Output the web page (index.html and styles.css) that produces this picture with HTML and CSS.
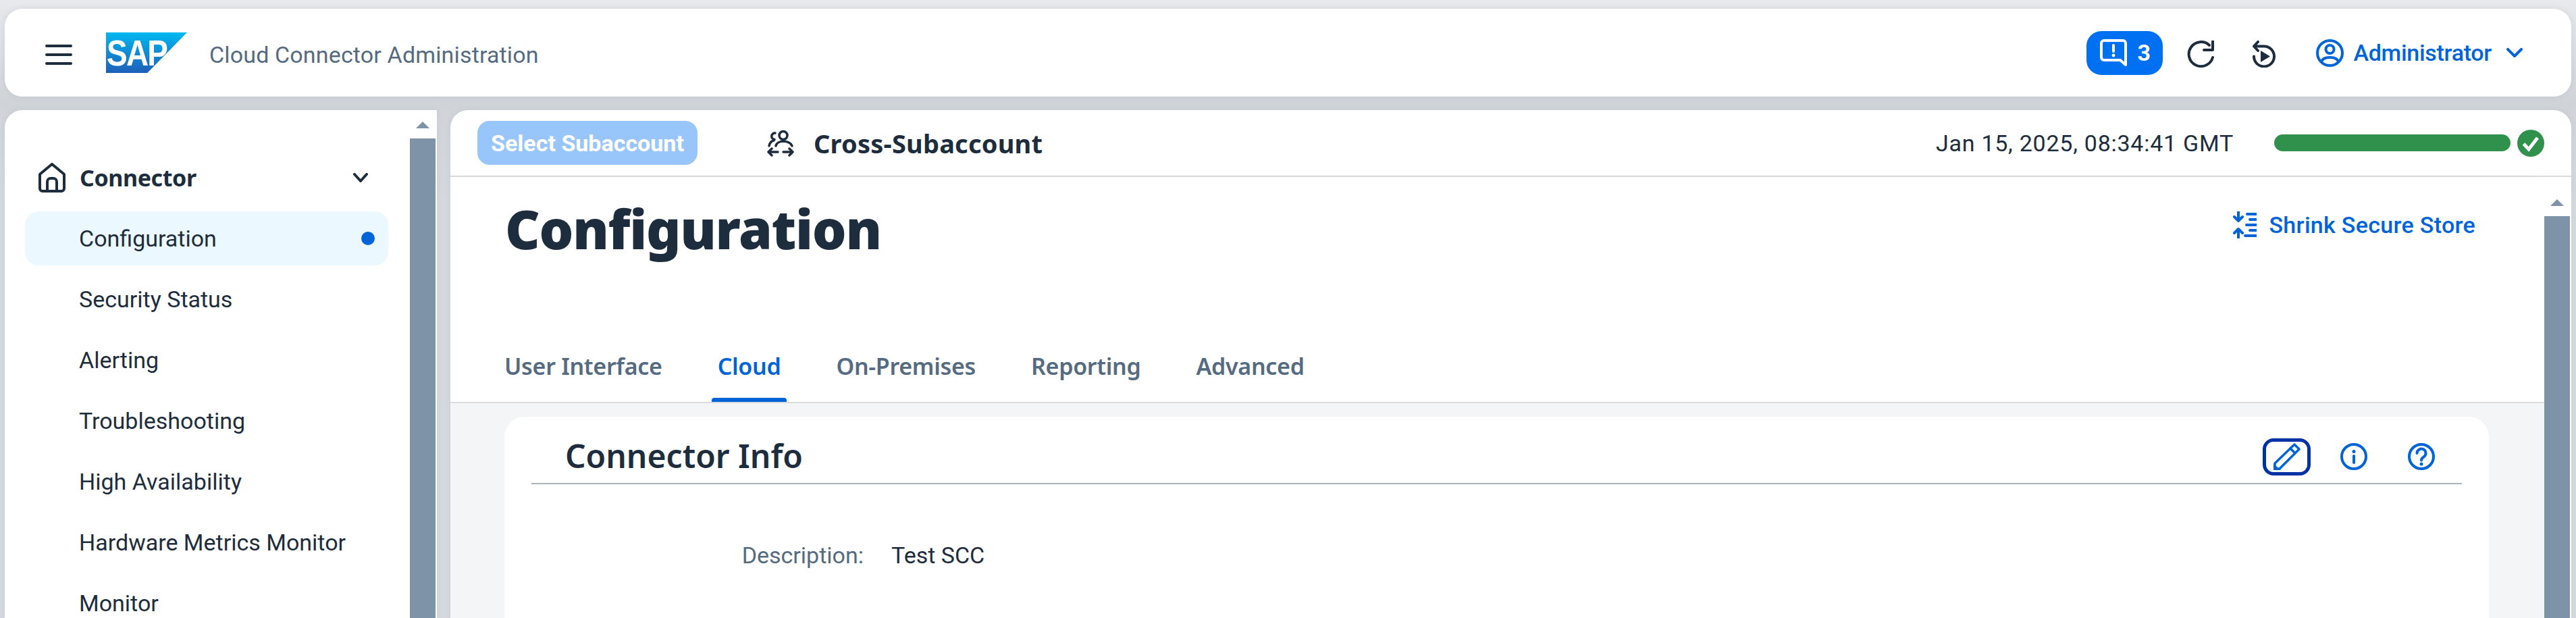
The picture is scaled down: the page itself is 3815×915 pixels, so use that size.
FILE: index.html
```html
<!DOCTYPE html>
<html lang="en">
	<head>
		<meta charset="UTF-8">
		<title>Cloud Connector Administration</title>
		<link rel="stylesheet" href="styles.css">
	</head>
	<body>
		<header class="shell-bar">
			<svg class="icon menu-icon" viewBox="0 0 40 32"><path d="M2 3H38M2 16H38M2 29H38"/></svg>
			<div class="logo"><span class="logo-text">SAP</span></div>
			<div class="app-title">Cloud Connector Administration</div>
			<div class="shell-right">
				<button class="notif-btn">
					<svg class="icon white" viewBox="0 0 40 40"><path d="M6 2H34a4 4 0 0 1 4 4V38L30 31H6a4 4 0 0 1-4-4V6a4 4 0 0 1 4-4z"/><path d="M20 9V18"/><circle class="fill" cx="20" cy="24" r="2.4"/></svg>
					<span>3</span>
				</button>
				<svg class="icon refresh-icon" viewBox="0 0 40 40"><path d="M38 25A18 18 0 1 1 33 7"/><path d="M38 1V14H25"/></svg>
				<svg class="icon replay-icon" viewBox="0 0 36 40"><path d="M8 2L2 8.500L8 15"/><path d="M3 8.500H17A15 15 0 1 1 2 23.500"/><path class="fill no-stroke" d="M12 15L26 23.500L12 32z"/></svg>
				<svg class="icon blue user-icon" viewBox="0 0 41 41"><circle cx="20.500" cy="20.500" r="18.500"/><circle cx="20.500" cy="15" r="6"/><path d="M8 33C11 25 30 25 33 33"/></svg>
				<span class="user-name">Administrator</span>
				<svg class="icon blue user-chevron" viewBox="0 0 24 14"><path d="M2 2L12 12L22 2"/></svg>
			</div>
		</header>

		<div class="workspace">
			<aside class="sidebar">
				<nav class="side-nav">
					<div class="nav-group">
						<svg class="icon home-icon" viewBox="0 0 40 44"><path d="M2 17L20 2L38 17V38a4 4 0 0 1-4 4H6a4 4 0 0 1-4-4z"/><path d="M13 42V28a5 5 0 0 1 5-5h4a5 5 0 0 1 5 5V42"/></svg>
						<span class="nav-group-label">Connector</span>
						<svg class="icon nav-chevron" viewBox="0 0 22 14"><path d="M2 2L11 12L20 2"/></svg>
					</div>
					<a class="nav-item active">Configuration<i class="nav-dot"></i></a>
					<a class="nav-item">Security Status</a>
					<a class="nav-item">Alerting</a>
					<a class="nav-item">Troubleshooting</a>
					<a class="nav-item">High Availability</a>
					<a class="nav-item">Hardware Metrics Monitor</a>
					<a class="nav-item">Monitor</a>
				</nav>
				<div class="scrollbar side-scroll"><div class="scroll-up"></div><div class="scroll-thumb"></div></div>
			</aside>

			<main class="panel">
				<div class="top-bar">
					<button class="select-btn" disabled>Select Subaccount</button>
					<svg class="icon cross-icon" viewBox="0 0 40 40"><circle cx="24" cy="8.500" r="6"/><path d="M11 14.500A4.500 4.500 0 0 1 12 5"/><path d="M13 24C15 15 33 15 37 24"/><path d="M3 24C4 19 6 17 10 16"/><path d="M2 33H16M7 28L2 33L7 38M38 33H24M33 28L38 33L33 38"/></svg>
					<span class="cross-label">Cross-Subaccount</span>
					<span class="timestamp">Jan 15, 2025, 08:34:41 GMT</span>
					<div class="progress"></div>
					<svg class="check-icon" viewBox="0 0 40 40"><circle cx="20" cy="20" r="20" fill="#30914c"/><path d="M9.500 21L17 29L30 12" fill="none" stroke="#fff" stroke-width="5"/></svg>
				</div>

				<div class="panel-body">
					<div class="page">
						<section class="page-head">
							<div class="title-row">
								<h1>Configuration</h1>
								<a class="shrink-link">
									<svg class="icon blue" viewBox="0 0 35 40"><path d="M8 1V14M2 8L8 14L14 8M8 39V26M2 32L8 26L14 32"/><path d="M21 4H35M25 12H35M20 20H35M25 28H35M18 36H35"/></svg>
									Shrink Secure Store
								</a>
							</div>
							<div class="tabs">
								<a class="tab">User Interface</a>
								<a class="tab active">Cloud</a>
								<a class="tab">On-Premises</a>
								<a class="tab">Reporting</a>
								<a class="tab">Advanced</a>
							</div>
						</section>
						<section class="page-content">
							<div class="card">
								<div class="card-head">
									<h2>Connector Info</h2>
									<div class="card-tools">
										<button class="edit-btn"><svg class="icon blue" viewBox="0 0 40 40"><path d="M2 30L31 2L38 9L9 38H2z"/><path d="M25 8L32 15"/><path class="fill no-stroke" d="M0 30L10 40H0z"/></svg></button>
										<svg class="icon blue tool-icon" viewBox="0 0 40 40"><circle cx="20" cy="20" r="18"/><circle class="fill" cx="20" cy="12.500" r="2.500"/><path d="M20 19V29"/></svg>
										<svg class="icon blue tool-icon help-icon" viewBox="0 0 40 40"><circle cx="20" cy="20" r="18"/><path d="M13.500 15A6.500 6.500 0 1 1 23.500 20.500C21 22 20 23 20 25.500"/><circle class="fill" cx="20" cy="31" r="2.500"/></svg>
									</div>
								</div>
								<div class="field-row">
									<span class="field-label">Description:</span>
									<span class="field-value">Test SCC</span>
								</div>
							</div>
						</section>
					</div>
					<div class="scrollbar main-scroll"><div class="scroll-up"></div><div class="scroll-thumb"></div></div>
				</div>
			</main>
		</div>
	</body>
</html>
```

FILE: styles.css
```css
* {
	box-sizing: border-box;
}
html, body {
	height: 100%;
}
body {
	margin: 0;
	padding: 13px 7px 0;
	overflow: hidden;
	font-family: Roboto, "Noto Sans", sans-serif;
	font-size: 34px;
	color: #1d2d3e;
	background: linear-gradient(#e8eaed 0, #e4e6e9 20px, #d0d4d9 150px, #d5d9dd 300px);
}
button {
	font: inherit;
	border: none;
}
h1, h2 {
	margin: 0;
}

/* icons */
.icon {
	flex: none;
	display: block;
	fill: none;
	stroke: #1d2d3e;
	stroke-width: 4;
	stroke-linecap: round;
	stroke-linejoin: round;
}
.icon .fill {
	fill: #1d2d3e;
	stroke: none;
}
.icon.blue {
	stroke: #0064d9;
}
.icon.blue .fill {
	fill: #0064d9;
}
.icon.white {
	stroke: #fff;
}
.icon.white .fill {
	fill: #fff;
}

/* shell bar */
.shell-bar {
	display: flex;
	align-items: center;
	height: 130px;
	padding: 0 72px 0 60px;
	background: #fff;
	border-radius: 26px;
	box-shadow: 0 0 8px rgba(85, 107, 130, .12);
}
.menu-icon {
	width: 40px;
	height: 32px;
	margin-top: 5px;
}
.logo {
	width: 120px;
	height: 60px;
	margin-left: 50px;
	padding: 7px 0 0 1px;
	background: linear-gradient(#00b8f1, #1e5fb8);
	clip-path: polygon(0 0, 100% 0, 51% 100%, 0 100%);
}
.logo-text {
	display: block;
	color: #fff;
	font-family: "Liberation Sans", sans-serif;
	font-weight: 700;
	font-size: 54px;
	line-height: 46px;
	letter-spacing: -2px;
	transform: scaleX(.85);
	transform-origin: left;
}
.app-title {
	margin: 6px 0 0 33px;
	color: #556b82;
	letter-spacing: .15px;
}
.shell-right {
	display: flex;
	align-items: center;
	margin-left: auto;
}
.notif-btn {
	display: flex;
	align-items: center;
	gap: 16px;
	width: 113px;
	height: 65px;
	padding: 0 0 0 20px;
	color: #fff;
	font-weight: 700;
	background: #0070f2;
	border-radius: 22px;
}
.notif-btn svg {
	width: 40px;
	height: 40px;
}
.refresh-icon {
	width: 40px;
	height: 40px;
	margin: 4px 0 0 36px;
}
.replay-icon {
	width: 36px;
	height: 40px;
	margin: 4px 0 0 57px;
}
.user-icon {
	width: 41px;
	height: 41px;
	margin-left: 58px;
}
.user-name {
	margin-left: 15px;
	color: #0064d9;
	font-weight: 500;
	letter-spacing: -.3px;
}
.user-chevron {
	width: 24px;
	height: 14px;
	margin-left: 22px;
}

/* layout below the shell bar */
.workspace {
	display: flex;
	gap: 20px;
	height: 752px;
	margin-top: 20px;
}

/* side navigation */
.sidebar {
	display: flex;
	flex: none;
	width: 640px;
	padding-right: 2px;
	background: #fff;
	border-radius: 26px 0 0 0;
	box-shadow: 0 0 8px rgba(85, 107, 130, .1);
}
.side-nav {
	flex: 1;
	padding: 75px 32px 0 30px;
}
.nav-group {
	display: flex;
	align-items: center;
	height: 50px;
	padding: 0 30px 0 20px;
	margin-bottom: 25px;
}
.home-icon {
	width: 40px;
	height: 44px;
}
.nav-group-label {
	margin-left: 21px;
	font-family: "Noto Sans", sans-serif;
	font-weight: 700;
	letter-spacing: -.4px;
}
.nav-chevron {
	width: 22px;
	height: 14px;
	margin-left: auto;
}
.nav-item {
	display: flex;
	align-items: center;
	height: 80px;
	margin-bottom: 10px;
	padding: 0 20px 0 80px;
	border-radius: 20px;
}
.nav-item.active {
	background: #ebf8ff;
}
.nav-dot {
	width: 20px;
	height: 20px;
	margin-left: auto;
	background: #0064d9;
	border-radius: 50%;
}

/* scrollbars */
.scrollbar {
	flex: none;
	width: 38px;
	background: #fff;
}
.scroll-up {
	height: 42px;
	padding-top: 17px;
}
.scroll-up::before {
	content: "";
	display: block;
	width: 0;
	margin: 0 auto;
	border: 10px solid transparent;
	border-top: 0;
	border-bottom-color: #7e92a8;
}
.scroll-thumb {
	height: 100%;
	background: #7e92a8;
}

/* main panel */
.panel {
	display: flex;
	flex-direction: column;
	flex: 1;
	min-width: 0;
	overflow: hidden;
	background: #fff;
	border-radius: 26px 26px 0 0;
	box-shadow: 0 0 8px rgba(85, 107, 130, .1);
}
.top-bar {
	display: flex;
	align-items: center;
	flex: none;
	height: 99px;
	padding: 0 40px;
	border-bottom: 2px solid #dcdcdc;
}
.select-btn {
	width: 326px;
	height: 65px;
	margin-right: 103px;
	color: #fff;
	font-weight: 700;
	background: #99c6fa;
	border-radius: 18px;
}
.cross-icon {
	width: 40px;
	height: 40px;
	stroke-width: 3.500;
}
.cross-label {
	margin-left: 29px;
	font-family: "Noto Sans", sans-serif;
	font-size: 38px;
	font-weight: 700;
	letter-spacing: .2px;
}
.timestamp {
	margin-left: auto;
	letter-spacing: .75px;
}
.progress {
	width: 350px;
	height: 25px;
	margin-left: 60px;
	background: #30914c;
	border-radius: 13px;
}
.check-icon {
	flex: none;
	display: block;
	width: 40px;
	height: 40px;
	margin-left: 10px;
}
.panel-body {
	display: flex;
	flex: 1;
	min-height: 0;
	padding-right: 2px;
}
.main-scroll {
	padding-top: 16px;
}
.page {
	display: flex;
	flex-direction: column;
	flex: 1;
	min-width: 0;
}
.page-head {
	flex: none;
	height: 335px;
	border-bottom: 2px solid #dcdcdc;
	box-shadow: 0 4px 14px rgba(0, 0, 0, .06);
}
.title-row {
	display: flex;
	justify-content: space-between;
	height: 247px;
	padding: 29px 102px 0 81px;
}
h1 {
	font-family: "Noto Sans", sans-serif;
	font-size: 80px;
	font-weight: 900;
	line-height: 94px;
	letter-spacing: -1.3px;
}
.shrink-link {
	display: flex;
	align-items: center;
	gap: 18px;
	height: 40px;
	margin-top: 22px;
	color: #0064d9;
	font-weight: 500;
	letter-spacing: .3px;
}
.shrink-link svg {
	width: 35px;
	height: 40px;
}
.tabs {
	display: flex;
	height: 86px;
	padding-left: 80px;
}
.tab {
	display: flex;
	align-items: center;
	margin-right: 82px;
	height: 100%;
	padding-bottom: 20px;
	color: #556b82;
	font-family: "Noto Sans", sans-serif;
	font-weight: 600;
	letter-spacing: -.3px;
}
.tab.active {
	color: #0064d9;
	position: relative;
}
.tab.active::after {
	content: "";
	position: absolute;
	left: -9px;
	right: -9px;
	bottom: 0;
	height: 6px;
	background: #0064d9;
	border-radius: 4px 4px 0 0;
}
.page-content {
	flex: 1;
	padding: 20px 82px 0 80px;
	background: #f4f5f7;
}
.card {
	height: 100%;
	padding: 0 40px;
	background: #fff;
	border-radius: 30px 30px 0 0;
}
.card-head {
	display: flex;
	align-items: center;
	justify-content: space-between;
	height: 100px;
	padding: 16px 40px 0 50px;
	border-bottom: 2px solid #a9b4be;
}
h2 {
	font-family: "Noto Sans", sans-serif;
	font-size: 48px;
	font-weight: 600;
}
.card-tools {
	display: flex;
	align-items: center;
	gap: 44px;
	margin-top: 4px;
}
.edit-btn {
	display: flex;
	align-items: center;
	justify-content: center;
	width: 71px;
	height: 55px;
	padding: 0;
	background: #fff;
	border: 5px solid #0032a5;
	border-radius: 16px;
}
.edit-btn svg {
	width: 40px;
	height: 40px;
	stroke-width: 3.500;
}
.tool-icon {
	width: 40px;
	height: 40px;
}
.help-icon {
	margin-left: 16px;
}
.field-row {
	display: flex;
	gap: 41px;
	margin-top: 83px;
	line-height: 44px;
}
.field-label {
	width: 492px;
	color: #556b82;
	text-align: right;
}
```
